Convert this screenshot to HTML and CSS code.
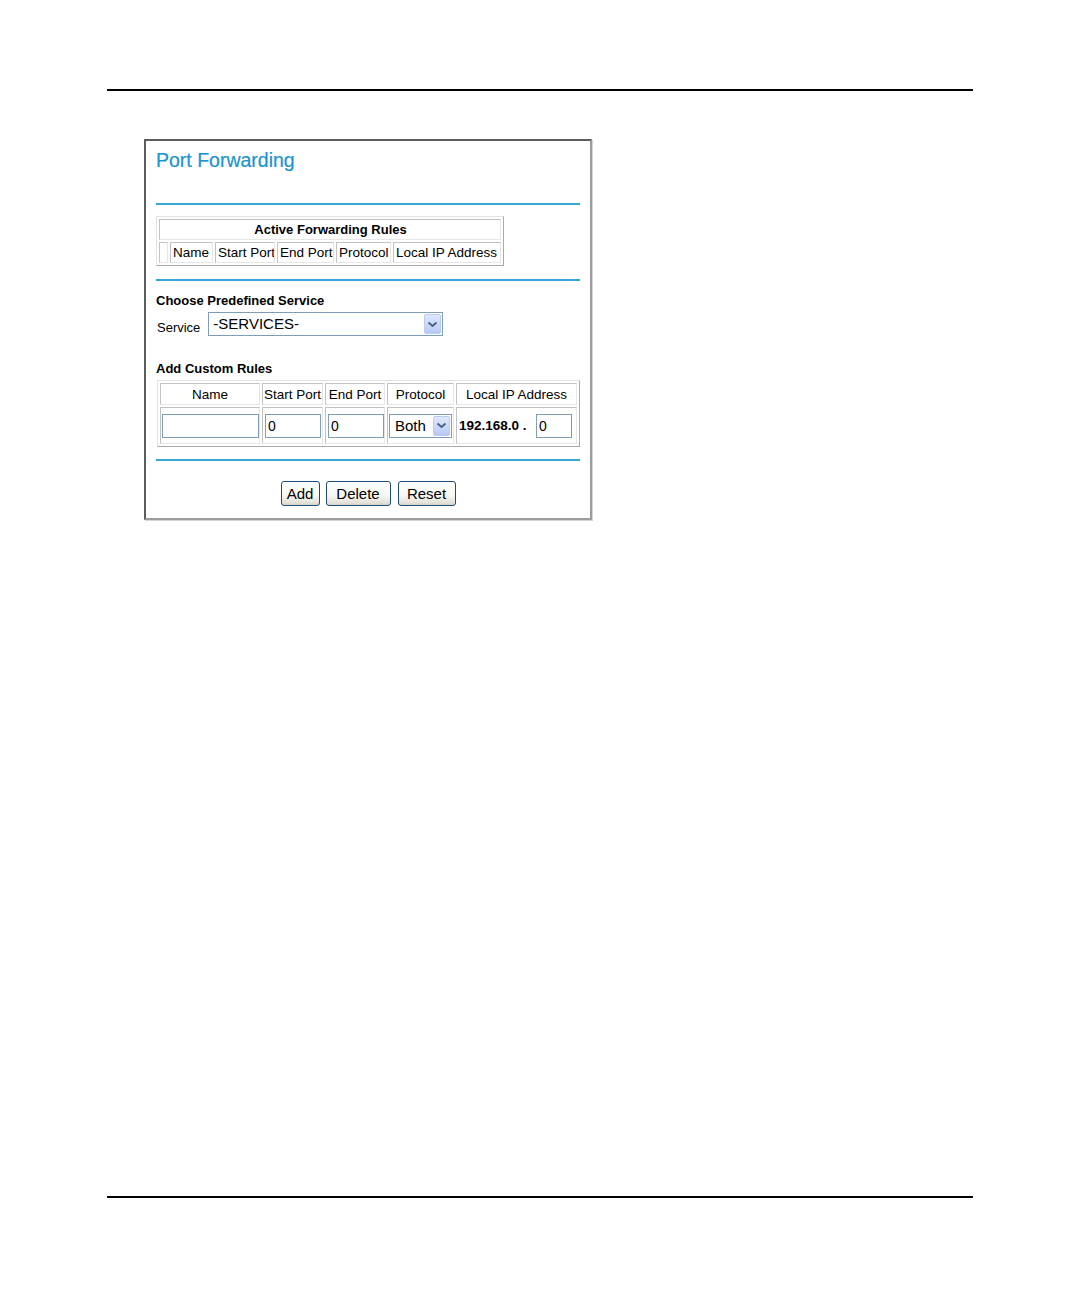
FILE: index.html
```html
<!DOCTYPE html>
<html>
<head>
<meta charset="utf-8">
<title>Port Forwarding</title>
<link rel="stylesheet" href="styles.css">
</head>
<body>
<div class="page">
  <div class="rule rule-top"></div>

  <div class="window">
    <h1 class="title">Port Forwarding</h1>
    <div class="blue-line first"></div>

    <table class="grid active">
      <colgroup>
        <col style="width:9px"><col style="width:43px"><col style="width:60px"><col style="width:57px"><col style="width:55px"><col style="width:108px">
      </colgroup>
      <tr><td colspan="6" class="active-head">Active Forwarding Rules</td></tr>
      <tr>
        <td></td><td>Name</td><td>Start Port</td><td>End Port</td><td>Protocol</td><td>Local IP Address</td>
      </tr>
    </table>

    <div class="blue-line second"></div>

    <h2 class="section">Choose Predefined Service</h2>
    <div class="service-row">
      <span class="label">Service</span>
      <div class="select service-select">
        <span class="select-text">-SERVICES-</span>
        <span class="select-btn"><svg width="11" height="7" viewBox="0 0 11 7"><path d="M1.5 1.5 L5.5 5 L9.5 1.5" fill="none" stroke="#4d6185" stroke-width="2"/></svg></span>
      </div>
    </div>

    <h2 class="section custom-head">Add Custom Rules</h2>
    <table class="grid custom">
      <colgroup>
        <col style="width:100px"><col style="width:61px"><col style="width:60px"><col style="width:67px"><col style="width:121px">
      </colgroup>
      <tr class="hdr">
        <td>Name</td><td>Start Port</td><td>End Port</td><td>Protocol</td><td>Local IP Address</td>
      </tr>
      <tr class="inputs">
        <td><input class="field f-name" type="text" value=""></td>
        <td><input class="field f-port" type="text" value="0"></td>
        <td><input class="field f-port" type="text" value="0"></td>
        <td>
          <div class="select proto-select">
            <span class="select-text">Both</span>
            <span class="select-btn"><svg width="11" height="7" viewBox="0 0 11 7"><path d="M1.5 1.5 L5.5 5 L9.5 1.5" fill="none" stroke="#4d6185" stroke-width="2"/></svg></span>
          </div>
        </td>
        <td class="ip-cell"><span class="ip-prefix">192.168.0 .</span><input class="field f-ip" type="text" value="0"></td>
      </tr>
    </table>

    <div class="blue-line third"></div>

    <div class="buttons">
      <button class="btn b-add">Add</button>
      <button class="btn b-del">Delete</button>
      <button class="btn b-reset">Reset</button>
    </div>
  </div>

  <div class="rule rule-bottom"></div>
</div>
</body>
</html>
```

FILE: styles.css
```css
html, body {
  margin: 0;
  padding: 0;
  background: #ffffff;
}

.page {
  padding: 0 107px;
  font-family: "Liberation Sans", Arial, sans-serif;
  color: #000;
}

.rule {
  width: 866px;
  height: 2px;
  background: #000;
}

.rule-top {
  margin-top: 89px;
}

.rule-bottom {
  margin-top: 676px;
}

.window {
  box-sizing: border-box;
  width: 448px;
  margin: 48px 0 0 37px;
  padding: 8px 10px 12px 10px;
  border-top: 2px solid #5e5e5e;
  border-left: 2px solid #5e5e5e;
  border-right: 2px solid #9c9c9c;
  border-bottom: 2px solid #9c9c9c;
  box-shadow: 1px 1px 0 #d4d4d4;
  background: #fff;
}

.title {
  margin: 0;
  font-size: 19.5px;
  line-height: 22px;
  font-weight: normal;
  color: #1a94d0;
  -webkit-text-stroke: 0.2px #1a94d0;
}

.blue-line {
  height: 2px;
  background: #36a4d4;
}

.blue-line.first {
  margin-top: 32px;
}

.blue-line.second {
  margin-top: 13px;
}

.blue-line.third {
  margin-top: 12px;
}

.grid {
  table-layout: fixed;
  border-collapse: separate;
  border-spacing: 2px;
  border: 1px solid;
  border-color: #e2e2e2 #a9a9a9 #a9a9a9 #e2e2e2;
  font-size: 13.5px;
}

.grid td {
  box-sizing: border-box;
  padding: 0 1px;
  border: 1px solid;
  border-color: #c2c2c2 #e6e6e6 #e6e6e6 #c2c2c2;
  line-height: 15px;
  white-space: nowrap;
  overflow: hidden;
}

.active {
  width: 348px;
  margin-top: 11px;
}

.active td {
  height: 21px;
  padding: 0 1px 0 2px;
}

.active td.active-head {
  text-align: center;
  font-weight: bold;
  font-size: 13px;
}

.section {
  margin: 12px 0 0 0;
  font-size: 13px;
  line-height: 15px;
  font-weight: bold;
}

.service-row {
  display: flex;
  align-items: flex-end;
  margin-top: 4px;
  height: 24px;
}

.label {
  font-size: 13px;
  line-height: 15px;
  margin-left: 1px;
  margin-right: 8px;
  padding-bottom: 1px;
}

.select {
  box-sizing: border-box;
  display: flex;
  align-items: center;
  justify-content: space-between;
  height: 24px;
  border: 1px solid #7f9db9;
  background: #fff;
  font-size: 15px;
}

.select-text {
  padding-left: 4px;
  line-height: 18px;
}

.select-btn {
  box-sizing: border-box;
  display: flex;
  align-items: center;
  justify-content: center;
  width: 17px;
  height: 20px;
  margin-right: 1px;
  border: 1px solid #b9cbf1;
  border-radius: 2px;
  background: linear-gradient(180deg, #dfe8fd 0%, #c7d7fa 60%, #b6c9f5 100%);
}

.service-select {
  width: 235px;
}

.custom-head {
  margin-top: 25px;
}

.custom {
  width: 423px;
  margin: 4px 0 0 1px;
}

.custom tr.hdr td {
  height: 22px;
  text-align: center;
}

.custom tr.inputs td {
  height: 37px;
  padding: 0 2px 0 1px;
  vertical-align: middle;
}

.field {
  box-sizing: border-box;
  display: block;
  height: 24px;
  margin: 0;
  padding: 0 2px;
  border: 1px solid #7f9db9;
  background: #fff;
  font-family: "Liberation Sans", Arial, sans-serif;
  font-size: 14px;
  color: #000;
}

.f-name {
  width: 97px;
}

.f-port {
  width: 56px;
  margin-left: 1px;
}

.proto-select {
  width: 63px;
}

.proto-select .select-text {
  padding-left: 5px;
}

.custom tr.inputs td.ip-cell {
  padding-left: 2px;
}

.ip-prefix {
  display: inline-block;
  vertical-align: middle;
  font-weight: bold;
  font-size: 13.5px;
  width: 77px;
}

.f-ip {
  display: inline-block;
  vertical-align: middle;
  width: 36px;
}

.buttons {
  display: flex;
  justify-content: center;
  gap: 6px;
  margin-top: 20px;
}

.btn {
  box-sizing: border-box;
  height: 25px;
  margin: 0;
  padding: 0;
  border: 1px solid #1c4c7c;
  border-radius: 3px;
  background: linear-gradient(180deg, #ffffff 0%, #f6f6f2 60%, #e4e1d8 90%, #d6d2c6 100%);
  font-family: "Liberation Sans", Arial, sans-serif;
  font-size: 15px;
  color: #000;
}

.b-add {
  width: 39px;
}

.b-del {
  width: 65px;
}

.b-reset {
  width: 58px;
  margin-left: 1px;
}
```
